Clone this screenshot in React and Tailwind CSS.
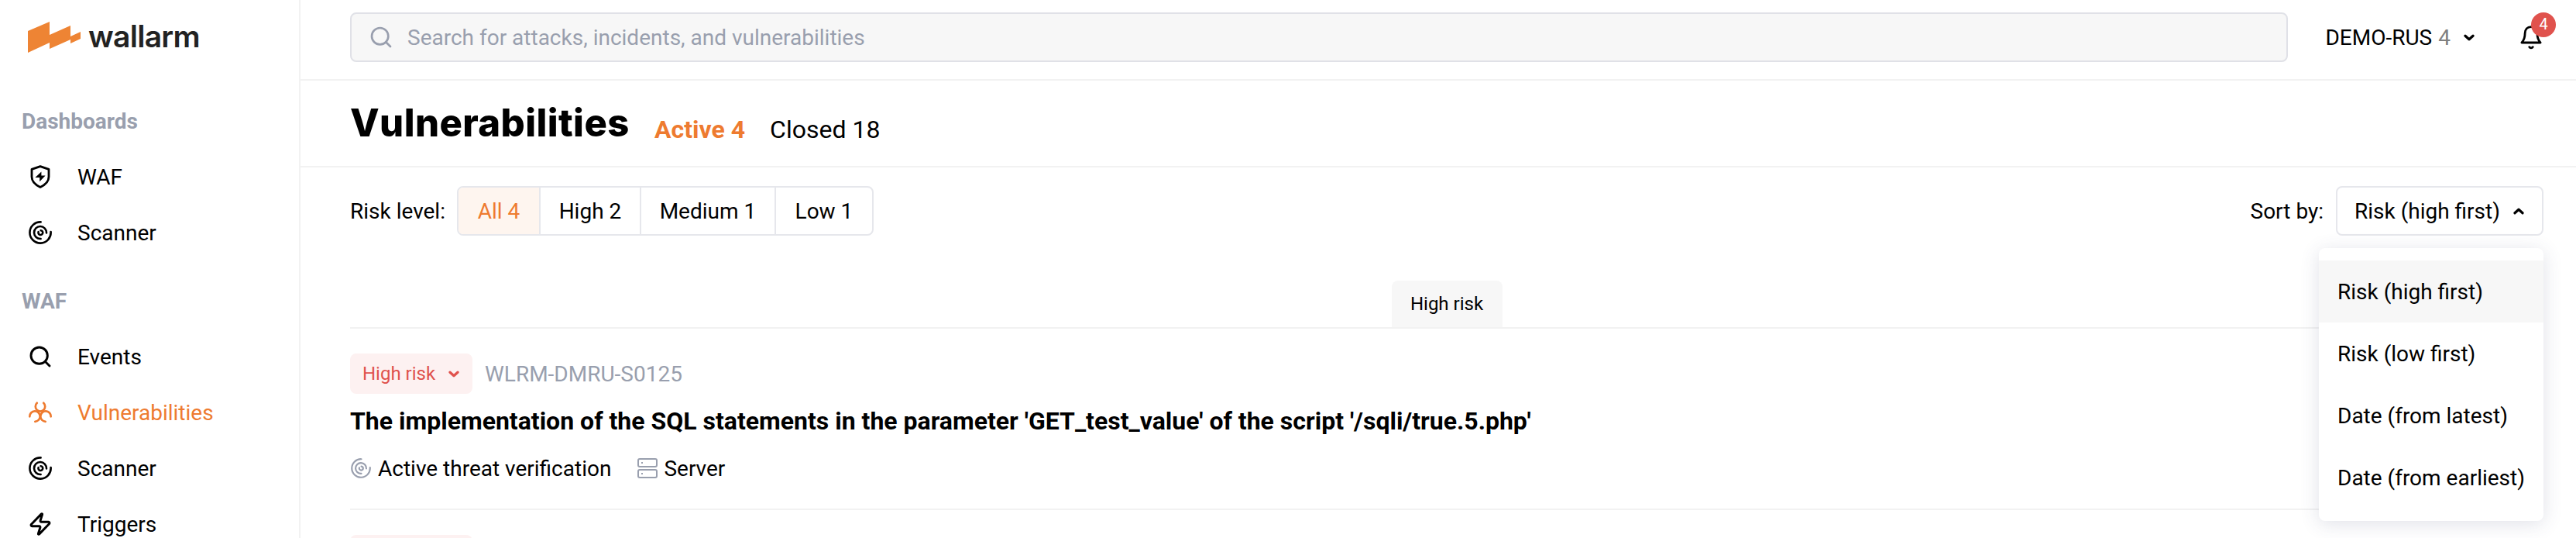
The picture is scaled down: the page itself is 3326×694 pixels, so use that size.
import React from "react";
import { Search, Zap } from "lucide-react";

const Chevron = ({ className = "", up }) => (
  <svg viewBox="0 0 14 9" className={"h-[9px] w-[14px] " + className} fill="none" stroke="currentColor" strokeWidth="3.2" strokeLinecap="round" strokeLinejoin="round">
    <path d={up ? "M2 6.8 7 2.2l5 4.6" : "M2 2.2l5 4.6 5-4.6"} />
  </svg>
);

const Radar = ({ className, sw = 2.6 }) => (
  <svg viewBox="1 1 30 30" className={className} fill="none" stroke="currentColor" strokeWidth={sw} strokeLinecap="round">
    <path d="M16.6 2.4A13.6 13.6 0 1 0 29.6 15" />
    <path d="M24 16.4A8 8 0 1 0 16.6 24" />
    <path d="M13.6 15.2a2.9 2.9 0 1 0 3-2" />
  </svg>
);

const Shield = ({ className }) => (
  <svg viewBox="0 0 32 32" className={className} fill="none" stroke="currentColor" strokeWidth="2.8" strokeLinejoin="round">
    <path d="M16 2.6 27 6.4V16c0 6.2-4.6 10.4-11 13.4C9.6 26.4 5 22.2 5 16V6.4Z" />
    <path d="M17.4 9.4 9.4 17h5.8v5.2L22.6 14.6h-5.2Z" fill="currentColor" stroke="none" />
  </svg>
);

const Biohazard = ({ className }) => (
  <svg viewBox="0 0 32 32" className={className} fill="none" stroke="currentColor" strokeWidth="2.7" strokeLinecap="round">
    <path d="M11.8 3.8A6.2 6.2 0 1 0 20.2 3.8" />
    <path d="M2.3 21.3A6.7 6.7 0 1 1 9.3 27.8" />
    <path d="M29.7 21.3A6.7 6.7 0 1 0 22.7 27.8" />
  </svg>
);

const Server = ({ className }) => (
  <svg viewBox="0 0 26 26" className={className} fill="none" stroke="currentColor" strokeWidth="2">
    <rect x="1" y="1" width="24" height="10" rx="2" />
    <rect x="1" y="15" width="24" height="10" rx="2" />
    <path d="M5 6h2M5 20h2" />
  </svg>
);

const Bell = ({ className }) => (
  <svg viewBox="0 0 32 32" className={className} fill="none" stroke="currentColor" strokeWidth="2.8" strokeLinecap="round" strokeLinejoin="round">
    <path d="M16 2.6c-5 0-7.8 3.4-7.9 8.4 0 5-1 8.6-4.2 12h24.2c-3.2-3.4-4.2-7-4.2-12-.1-5-2.9-8.4-7.9-8.4Z" />
    <path d="M13.7 28.6c1 1.6 3.6 1.6 4.6 0" />
  </svg>
);

const NavItem = ({ icon, label, active }) => (
  <a className={"flex h-[72px] items-center pl-[36px] " + (active ? "text-[#ee7b30]" : "text-black")}>
    <span className="flex w-8 justify-center">{icon}</span>
    <span className="ml-8 translate-y-px">{label}</span>
  </a>
);

const SectionTitle = ({ children }) => (
  <h2 className="translate-y-px pl-[28px] leading-[32px] font-bold text-[#999fae]">{children}</h2>
);

const levels = [
  { label: "All 4", width: "w-[104px]", active: true },
  { label: "High 2", width: "w-[130px]" },
  { label: "Medium 1", width: "w-[174px]" },
  { label: "Low 1", width: "w-[126px]" },
];

const sortOptions = ["Risk (high first)", "Risk (low first)", "Date (from latest)", "Date (from earliest)"];

export default function App() {
  return (
    <div className="flex h-[694px] w-[3326px] overflow-hidden bg-white font-[Roboto,sans-serif] text-[28px] leading-[32px] text-black">
      <aside className="w-[388px] shrink-0 border-r-2 border-[#f2f2f2]">
        <div className="flex h-[103px] items-start pt-[28px] pl-[36px]">
          <svg viewBox="0 0 68 40" className="h-[40px] w-[68px] text-[#ee8434]" fill="currentColor">
            <path d="M0 12 28 0v17L55 5v14l13-6v9L55 28v-5L28 35v-8L0 40Z" />
          </svg>
          <span className="-mt-px ml-[10px] font-[Inter,sans-serif] text-[39px] leading-[40px] font-semibold tracking-[-0.7px] text-[#222]">wallarm</span>
        </div>
        <div className="pt-[37px]">
          <SectionTitle>Dashboards</SectionTitle>
        </div>
        <nav className="pt-[20px]">
          <NavItem label="WAF" icon={<Shield className="size-8" />} />
          <NavItem label="Scanner" icon={<Radar className="size-[30px]" />} />
        </nav>
        <div className="pt-[36px]">
          <SectionTitle>WAF</SectionTitle>
        </div>
        <nav className="pt-[20px]">
          <NavItem label="Events" icon={<Search className="size-8" strokeWidth={2.2} />} />
          <NavItem label="Vulnerabilities" active icon={<Biohazard className="size-8" />} />
          <NavItem label="Scanner" icon={<Radar className="size-[30px]" />} />
          <NavItem label="Triggers" icon={<Zap className="size-8" strokeWidth={2.2} />} />
        </nav>
      </aside>

      <main className="min-w-0 flex-1">
        <header className="flex h-[104px] items-start border-b-2 border-[#f2f2f2] pt-[16px] pl-[64px]">
          <div className="flex h-[64px] w-[2502px] items-center rounded-[8px] border-2 border-[#e0e1e7] bg-[#f7f7f7] pl-[22px] text-[#999fae]">
            <Search className="size-8" />
            <span className="ml-[18px] translate-y-px">Search for attacks, incidents, and vulnerabilities</span>
          </div>
          <div className="ml-[47px] flex h-[64px] w-[194px] items-center justify-end">
            <span className="translate-y-px">DEMO-RUS</span>
            <span className="ml-[8px] translate-y-px text-[#808080]">4</span>
            <Chevron className="ml-[17px]" />
          </div>
          <div className="relative mt-[16px] ml-[57px]">
            <Bell className="size-8" />
            <span className="absolute -top-4 left-4 flex size-8 items-center justify-center rounded-full bg-[#e0524d] pb-[2px] text-[20px] text-white">4</span>
          </div>
        </header>

        <section className="flex h-[112px] items-baseline border-b-2 border-[#f2f2f2] pt-[29px] pl-[64px]">
          <h1 className="w-[361px] -translate-y-0.5 font-[Inter,sans-serif] text-[49px] leading-[56px] font-extrabold tracking-[0.4px]">Vulnerabilities</h1>
          <span className="ml-[32px] text-[32px] font-bold text-[#ee7b30]">Active 4</span>
          <span className="ml-[32px] text-[32px]">Closed 18</span>
        </section>

        <section className="pr-[42px] pl-[64px]">
          <div className="flex items-center pt-[24px]">
            <span className="translate-y-px">Risk level:</span>
            <div className="ml-[15px] flex h-[64px] overflow-hidden rounded-[8px] border-2 border-[#e6e7ec]">
              {levels.map((l, i) => (
                <div key={l.label} className={"flex items-center justify-center " + l.width + (i ? " border-l-2 border-[#e6e7ec]" : "") + (l.active ? " bg-[#fef5ef] text-[#ee7b30]" : "")}>
                  <span className="translate-y-px">{l.label}</span>
                </div>
              ))}
            </div>
            <span className="ml-auto translate-y-px">Sort by:</span>
            <div className="relative ml-[16px]">
              <div className="flex h-[64px] w-[268px] items-center rounded-[8px] border-2 border-[#e6e7ec] pl-[22px]">
                <span className="translate-y-px">Risk (high first)</span>
                <Chevron up className="ml-[17px]" />
              </div>
              <ul className="absolute top-[80px] right-0 z-10 h-[352px] w-[290px] rounded-[8px] bg-white py-[16px] shadow-[0_4px_24px_rgba(60,70,110,0.16)]">
                {sortOptions.map((o, i) => (
                  <li key={o} className={"flex h-[80px] items-center pl-[24px] whitespace-nowrap" + (i === 0 ? " bg-[#f7f7f7]" : "")}>
                    <span className="translate-y-px">{o}</span>
                  </li>
                ))}
              </ul>
            </div>
          </div>

          <div className="mt-[58px] flex h-[62px] justify-center border-b-2 border-[#f2f2f2]">
            <span className="h-[60px] w-[143px] rounded-t-[8px] bg-[#f7f7f7] pt-[14px] text-center text-[24px]">High risk</span>
          </div>

          <article className="h-[234px] border-b-2 border-[#f2f2f2] pt-[32px]">
            <div className="flex items-center">
              <span className="flex h-[52px] w-[158px] items-center rounded-[8px] bg-[#fdf1f1] pl-[16px] text-[24px] text-[#e0524d]">
                High risk
                <Chevron className="ml-[17px]" />
              </span>
              <span className="ml-[16px] translate-y-px text-[#999fae]">WLRM-DMRU-S0125</span>
            </div>
            <h3 className="mt-[15px] text-[32px] leading-[40px] font-bold">
              The implementation of the SQL statements in the parameter 'GET_test_value' of the script '/sqli/true.5.php'
            </h3>
            <div className="mt-[25px] flex items-center">
              <Radar className="ml-px size-[26px] text-[#999fae]" sw={2.5} />
              <span className="ml-[9px] translate-y-px">Active threat verification</span>
              <Server className="ml-[34px] size-[26px] text-[#999fae]" />
              <span className="ml-[8px] translate-y-px">Server</span>
            </div>
          </article>
          <div className="mt-[32px] h-[52px] w-[158px] rounded-[8px] bg-[#fdf1f1]" />
        </section>
      </main>
    </div>
  );
}
